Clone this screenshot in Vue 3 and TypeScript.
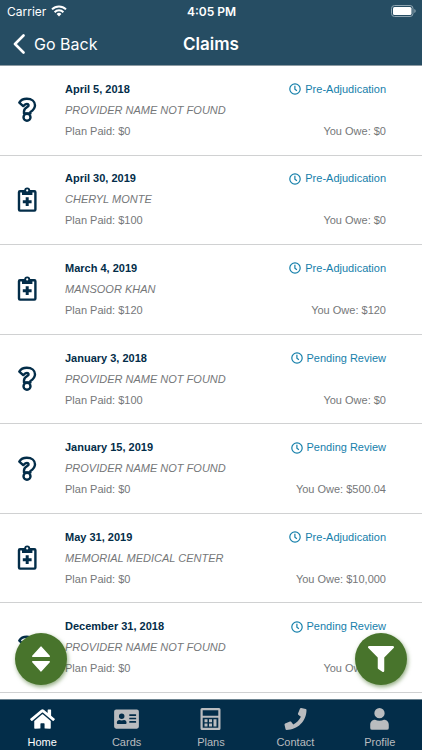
<script setup lang="ts">
interface Claim {
  date: string
  provider: string
  paid: string
  owe: string
  status: string
  known: boolean
}

const claims: Claim[] = [
  { date: 'April 5, 2018', provider: 'PROVIDER NAME NOT FOUND', paid: '$0', owe: '$0', status: 'Pre-Adjudication', known: false },
  { date: 'April 30, 2019', provider: 'CHERYL MONTE', paid: '$100', owe: '$0', status: 'Pre-Adjudication', known: true },
  { date: 'March 4, 2019', provider: 'MANSOOR KHAN', paid: '$120', owe: '$120', status: 'Pre-Adjudication', known: true },
  { date: 'January 3, 2018', provider: 'PROVIDER NAME NOT FOUND', paid: '$100', owe: '$0', status: 'Pending Review', known: false },
  { date: 'January 15, 2019', provider: 'PROVIDER NAME NOT FOUND', paid: '$0', owe: '$500.04', status: 'Pending Review', known: false },
  { date: 'May 31, 2019', provider: 'MEMORIAL MEDICAL CENTER', paid: '$0', owe: '$10,000', status: 'Pre-Adjudication', known: true },
  { date: 'December 31, 2018', provider: 'PROVIDER NAME NOT FOUND', paid: '$0', owe: '$0', status: 'Pending Review', known: false },
]

interface Tab {
  label: string
  viewBox: string
  path: string
}

const tabs: Tab[] = [
  {
    label: 'Home',
    viewBox: '0 0 576 512',
    path: 'M280.37 148.26L96 300.11V464a16 16 0 0 0 16 16l112.06-.29a16 16 0 0 0 15.92-16V368a16 16 0 0 1 16-16h64a16 16 0 0 1 16 16v95.64a16 16 0 0 0 16 16.05L464 480a16 16 0 0 0 16-16V300L295.67 148.26a12.19 12.19 0 0 0-15.3 0zM571.6 251.47L488 182.56V44.05a12 12 0 0 0-12-12h-56a12 12 0 0 0-12 12v72.61L318.47 43a48 48 0 0 0-61 0L4.34 251.47a12 12 0 0 0-1.6 16.9l25.5 31A12 12 0 0 0 45.15 301l235.22-193.74a12.19 12.19 0 0 1 15.3 0L530.9 301a12 12 0 0 0 16.9-1.6l25.5-31a12 12 0 0 0-1.7-16.93z',
  },
  {
    label: 'Cards',
    viewBox: '0 0 576 512',
    path: 'M48 32h480a48 48 0 0 1 48 48v352a48 48 0 0 1-48 48H48a48 48 0 0 1-48-48V80a48 48 0 0 1 48-48zM176 128a64 64 0 1 0 0 128a64 64 0 1 0 0-128zM120 280c-32 0-56 24-56 52v20a19 19 0 0 0 19 19h186a19 19 0 0 0 19-19v-20c0-28-24-52-56-52c-32 12-80 12-112 0zM360 144a8 8 0 0 0-8 8v24a8 8 0 0 0 8 8h144a8 8 0 0 0 8-8v-24a8 8 0 0 0-8-8zM360 224a8 8 0 0 0-8 8v24a8 8 0 0 0 8 8h144a8 8 0 0 0 8-8v-24a8 8 0 0 0-8-8zM360 304a8 8 0 0 0-8 8v24a8 8 0 0 0 8 8h144a8 8 0 0 0 8-8v-24a8 8 0 0 0-8-8z',
  },
  {
    label: 'Plans',
    viewBox: '0 0 20 22',
    path: 'M1.500 0h17a1.500 1.500 0 0 1 1.500 1.500v19a1.500 1.500 0 0 1-1.500 1.500h-17a1.500 1.500 0 0 1-1.500-1.500v-19a1.500 1.500 0 0 1 1.500-1.500zM2.200 2.200v5.600h15.600v-5.600zM2.200 9.800v10h15.600v-10zM4 11.200h3v3H4zM8.500 11.200h3v3h-3zM13 11.200h3v7.200h-3zM4 15.400h3v3H4zM8.500 15.400h3v3h-3z',
  },
  {
    label: 'Contact',
    viewBox: '0 0 512 512',
    path: 'M493.4 24.6l-104-24c-11.3-2.6-22.9 3.3-27.5 13.9l-48 112c-4.2 9.8-1.4 21.3 6.9 28l60.6 49.6c-36 76.7-98.9 140.5-177.2 177.2l-49.6-60.6c-6.8-8.3-18.2-11.1-28-6.9l-112 48C3.9 366.5-2 378.1.6 389.4l24 104C27.1 504.2 36.7 512 48 512c256.1 0 464-207.5 464-464 0-11.2-7.7-20.9-18.6-23.4z',
  },
  {
    label: 'Profile',
    viewBox: '0 0 448 512',
    path: 'M224 0a120 120 0 0 1 0 240a120 120 0 0 1 0-240zM120 272c60 32 148 32 208 0c68 0 112 52 112 120v72a44 44 0 0 1-44 44H52a44 44 0 0 1-44-44v-72c0-68 44-120 112-120z',
  },
]

const active = 'Home'
</script>

<template>
  <div class="app">
    <header class="top">
      <div class="status">
        <span class="carrier">
          Carrier
          <svg class="wifi" viewBox="0 0 16 12" aria-hidden="true">
            <g fill="none" stroke="currentColor" stroke-width="2">
              <path d="M1 4.4a10 10 0 0 1 14 0" />
              <path d="M3.6 7.2a6.2 6.2 0 0 1 8.8 0" />
            </g>
            <path d="M5.6 9a3.4 3.4 0 0 1 4.8 0L8 11.6z" fill="currentColor" />
          </svg>
        </span>
        <span class="time">4:05 PM</span>
        <svg class="battery" viewBox="0 0 25 12" aria-hidden="true">
          <rect x="0.5" y="0.5" width="21.5" height="11" rx="3" fill="none" stroke="#8fa5b1" />
          <rect x="2" y="2" width="18.5" height="8" rx="1.5" fill="#fff" />
          <path d="M23.3 4q1.4.6 1.4 2t-1.4 2z" fill="#8fa5b1" />
        </svg>
      </div>
      <div class="bar">
        <button class="back" type="button">
          <svg class="chevron" viewBox="0 0 12 20" aria-hidden="true">
            <path d="M10.5 1.5L2 10l8.500 8.500" fill="none" stroke="currentColor" stroke-width="2.600" stroke-linecap="round" stroke-linejoin="round" />
          </svg>
          Go Back
        </button>
        <h1>Claims</h1>
      </div>
    </header>

    <main class="main">
      <ul class="claims">
        <li v-for="claim in claims" :key="claim.date" class="claim">
          <svg v-if="claim.known" class="kind" viewBox="0 0 20 26" aria-hidden="true">
            <rect x="2" y="4.2" width="16.4" height="19.4" rx="1" fill="none" stroke="currentColor" stroke-width="2.4" />
            <path d="M5 8V3.600h2.200a3 3 0 0 1 6 0h2.200V8z" fill="currentColor" />
            <circle cx="10.2" cy="3.4" r="1.1" fill="#fff" />
            <path d="M10.2 10.300v8.800M5.800 14.700h8.800" stroke="currentColor" stroke-width="3" />
          </svg>
          <svg v-else class="kind" viewBox="0 0 20 26" aria-hidden="true">
            <g fill="none" stroke="currentColor" stroke-width="2.400" stroke-linejoin="round">
              <path d="M2.300 5.600C4 2.700 6.500 1.700 9.800 1.700C14.800 1.700 18 4.500 18 8.300C18 12.300 15.400 13.800 13.400 15V16.400H7V14.300C7 11.800 8.800 10.700 10.600 9.700C12.200 8.700 11.800 7 10 7C8.300 7 7.600 7.800 6.200 9.100Z" />
              <circle cx="10" cy="20.300" r="3.500" />
            </g>
          </svg>
          <div class="details">
            <div class="line">
              <strong class="date">{{ claim.date }}</strong>
              <a class="state" href="#">
                <svg class="clock" viewBox="0 0 12 12" aria-hidden="true">
                  <circle cx="6" cy="6" r="5.200" fill="none" stroke="currentColor" stroke-width="1.200" />
                  <path d="M5.900 2.800v3.400l2 1.600" fill="none" stroke="currentColor" stroke-width="1.200" />
                </svg>
                {{ claim.status }}
              </a>
            </div>
            <em class="provider">{{ claim.provider }}</em>
            <div class="line">
              <span>Plan Paid: {{ claim.paid }}</span>
              <span>You Owe: {{ claim.owe }}</span>
            </div>
          </div>
        </li>
      </ul>
    </main>

    <div class="bottom">
      <button class="fab sort" type="button" aria-label="Sort">
        <svg viewBox="0 0 20 26" aria-hidden="true">
          <path d="M10 1.200L18.200 10.200H1.800zM1.800 15.800H18.200L10 24.800z" fill="currentColor" stroke="currentColor" stroke-width="1.600" stroke-linejoin="round" />
        </svg>
      </button>
      <button class="fab filter" type="button" aria-label="Filter">
        <svg viewBox="0 0 512 512" aria-hidden="true">
          <path d="M487.976 0H24.028C2.710 0-8.047 25.866 7.058 40.971L192 225.941V432c0 7.831 3.821 15.170 10.237 19.662l80 55.980C298.020 518.690 320 507.493 320 487.980V225.941l184.947-184.970C520.021 25.896 509.338 0 487.976 0z" fill="currentColor" />
        </svg>
      </button>
      <nav class="tabs">
        <a v-for="tab in tabs" :key="tab.label" href="#" class="tab" :class="{ active: tab.label === active }">
          <svg :viewBox="tab.viewBox" aria-hidden="true">
            <path :d="tab.path" fill="currentColor" fill-rule="evenodd" />
          </svg>
          {{ tab.label }}
        </a>
      </nav>
    </div>
  </div>
</template>

<style>
body {
  margin: 0;
  background: #fff;
}
</style>

<style scoped>
.app {
  display: flex;
  flex-direction: column;
  min-height: 100vh;
  font-family: "Liberation Sans", Arial, sans-serif;
  font-size: 11px;
  color: #757779;
}

svg {
  display: block;
}

button {
  border: 0;
  margin: 0;
  padding: 0;
  font: inherit;
  color: inherit;
  background: none;
}

a {
  color: inherit;
  text-decoration: none;
}

.top {
  position: sticky;
  top: 0;
  z-index: 1;
  color: #fff;
  background: #264d63;
  border-bottom: 1px solid #8d9ba3;
  font-family: Inter, sans-serif;
}

.status {
  display: grid;
  grid-template-columns: 1fr auto 1fr;
  align-items: center;
  height: 22px;
  padding: 0 6px 0 7px;
  font-size: 12px;
}

.carrier {
  display: flex;
  align-items: center;
  gap: 5px;
}

.wifi {
  width: 16px;
  height: 12px;
}

.time {
  font-weight: 600;
}

.battery {
  justify-self: end;
  width: 25px;
  height: 12px;
}

.bar {
  display: grid;
  grid-template-columns: 1fr auto 1fr;
  align-items: center;
  height: 43px;
  padding: 0 13px;
}

.back {
  display: flex;
  align-items: center;
  gap: 9px;
  font-size: 16px;
}

.chevron {
  width: 12px;
  height: 20px;
}

h1 {
  margin: 0;
  font-size: 17px;
  font-weight: 600;
}

.main {
  display: flex;
  flex: 1;
  flex-direction: column;
  padding-bottom: 6px;
}

.claims {
  display: flex;
  flex: 1;
  flex-direction: column;
  margin: 0;
  padding: 0;
  list-style: none;
}

.claim {
  display: flex;
  flex: 1;
  align-items: center;
  gap: 28px;
  padding: 0 36px 0 17px;
  border-bottom: 1px solid #d0d1d2;
}

.kind {
  flex: none;
  width: 20px;
  height: 26px;
  color: #032d49;
}

.details {
  display: flex;
  flex: 1;
  flex-direction: column;
  gap: 6px;
  line-height: 15px;
}

.line {
  display: flex;
  justify-content: space-between;
}

.date {
  color: #032d49;
}

.state {
  display: flex;
  align-items: center;
  gap: 4px;
  color: #1680ab;
}

.clock {
  width: 12px;
  height: 12px;
}

.bottom {
  position: sticky;
  bottom: 0;
}

.tabs {
  display: grid;
  grid-template-columns: repeat(5, 1fr);
  background: #032d49;
  border-top: 1px solid #6c8390;
}

.tab {
  display: flex;
  flex-direction: column;
  align-items: center;
  gap: 6px;
  height: 42px;
  padding-top: 8px;
  line-height: 12px;
  color: #babcbf;
}

.tab svg {
  width: 25px;
  height: 22px;
}

.active {
  color: #fff;
}

.fab {
  position: absolute;
  bottom: 65px;
  display: grid;
  place-items: center;
  width: 52px;
  height: 52px;
  border-radius: 50%;
  color: #fff;
  background: #48742c;
  box-shadow: 1px 2px 4px #48742c99;
}

.fab svg {
  width: 26px;
  height: 26px;
}

.sort {
  left: 15px;
}

.filter {
  right: 15px;
}
</style>
